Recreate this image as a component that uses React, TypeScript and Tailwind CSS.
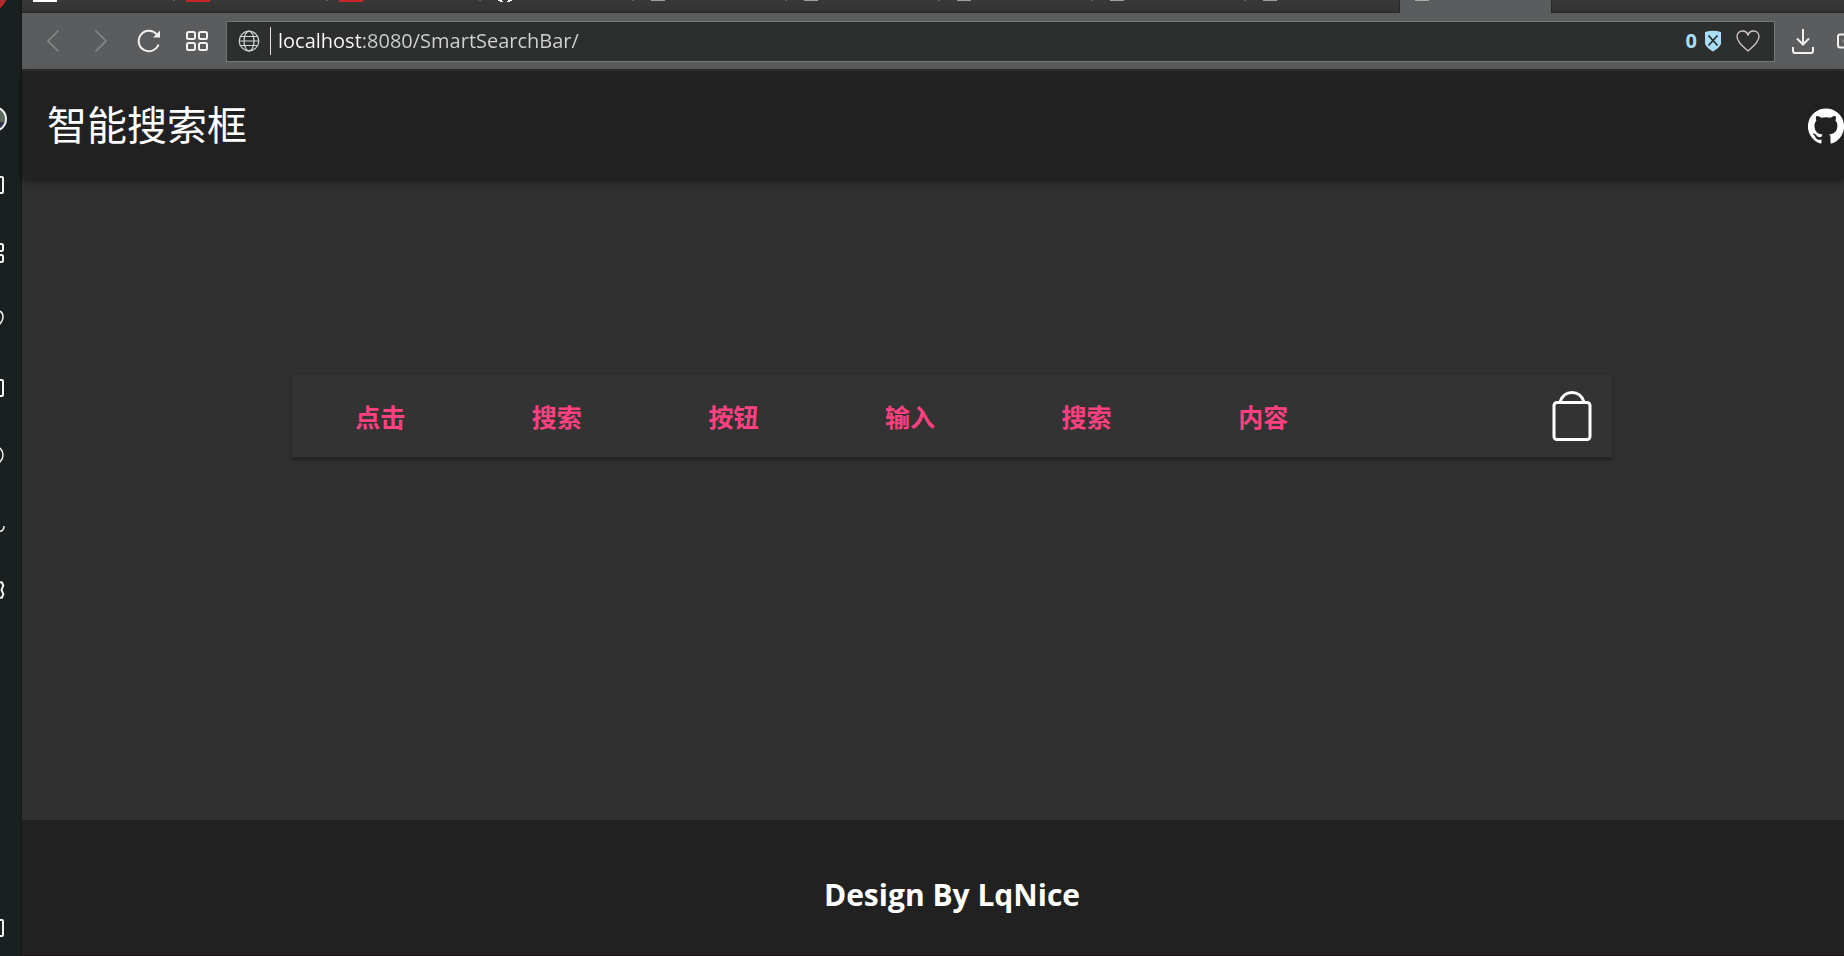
import type { ReactNode } from "react";

const words = ["点击", "搜索", "按钮", "输入", "搜索", "内容"];

const tabs = [
  { name: "one", icon: "w-6 h-[2px] bg-white", pad: "pl-[11px]" },
  { name: "two", icon: "w-6 h-[2px] bg-[#c62828]", pad: "pl-[11px]" },
  { name: "three", icon: "w-6 h-[2px] bg-[#c62828]", pad: "pl-[11px]" },
  { name: "four", icon: "cat", pad: "pl-[16px]" },
  { name: "five", icon: "w-[14px] h-px bg-[#9a9f9f]", pad: "pl-[17px]" },
  { name: "six", icon: "w-[14px] h-px bg-[#9a9f9f]", pad: "pl-[17px]" },
  { name: "seven", icon: "w-[14px] h-px bg-[#9a9f9f]", pad: "pl-[17px]" },
  { name: "eight", icon: "w-[14px] h-px bg-[#9a9f9f]", pad: "pl-[17px]" },
  { name: "nine", icon: "w-[14px] h-px bg-[#9a9f9f]", pad: "pl-[17px]" },
];

function SideIcon({ label, children }: { label: string; children: ReactNode }) {
  return (
    <li className="flex flex-1 items-center">
      <button type="button" aria-label={label} className="block">
        <svg width="8" height="28" viewBox="0 0 8 28" fill="none" stroke="#f2f2f2" strokeWidth="2">
          {children}
        </svg>
      </button>
    </li>
  );
}

function Sidebar() {
  return (
    <nav className="flex w-[22px] shrink-0 flex-col border-r border-[#141718] bg-[#1a1f20]">
      <svg width="8" height="85" viewBox="0 0 8 85">
        <circle cx="-8" cy="-4" r="14.5" fill="#b2292e" />
      </svg>
      <ul className="flex h-[540px] flex-col">
        <SideIcon label="Profile">
          <circle cx="-6" cy="14" r="12" fill="#5c6b5c" stroke="none" />
          <path d="M-6 17H6l-3 6-9 3z" fill="#33334f" stroke="none" />
          <circle cx="-6" cy="14" r="12" />
        </SideIcon>
        <SideIcon label="Messages">
          <rect x="-13" y="5" width="16" height="16" rx="1" />
        </SideIcon>
        <SideIcon label="Speed dial">
          <rect x="-4" y="4" width="7" height="7" rx="1.5" />
          <rect x="-4" y="15" width="7" height="7" rx="1.5" />
        </SideIcon>
        <SideIcon label="Bookmarks">
          <path d="M-2 4C1 4 3 6 3 10c0 4-2 6-5 9" strokeWidth="1.5" />
        </SideIcon>
        <SideIcon label="News">
          <rect x="-13" y="5" width="16" height="16" rx="1" />
        </SideIcon>
        <SideIcon label="History">
          <circle cx="-6" cy="13" r="9" strokeWidth="1.5" />
        </SideIcon>
        <SideIcon label="Flow">
          <path d="M-2 21c4 1 6-1 6-5" strokeWidth="1.5" />
        </SideIcon>
        <SideIcon label="Settings">
          <path d="M-1 5l3 .5 1.300 3L1.500 13l1.800 4-1.300 3.500-3 .5" />
        </SideIcon>
      </ul>
      <button type="button" aria-label="Sidebar setup" className="mt-auto mb-[19px] block">
        <svg width="8" height="18" viewBox="0 0 8 18" fill="none" stroke="#f2f2f2" strokeWidth="2">
          <rect x="-13" y="1" width="16" height="16" rx="1" />
        </svg>
      </button>
    </nav>
  );
}

function TabStrip() {
  return (
    <div className="flex h-[13px] bg-gradient-to-b from-[#393939] to-[#323232]">
      {tabs.map((tab, i) => (
        <div
          key={tab.name}
          className={`flex h-[13px] w-[153px] shrink-0 items-start justify-between border-b border-[#262727] ${tab.pad}`}
        >
          {tab.icon === "cat" ? (
            <svg width="16" height="2" viewBox="0 0 16 2" fill="#fff">
              <path d="M1 0h4v1h1v1H3V1H1zM15 0h-4v1h-1v1h3V1h2z" />
            </svg>
          ) : (
            <span className={tab.icon} />
          )}
          {i < 8 && <span className="h-px w-[2px] bg-[#5c6468]" />}
        </div>
      ))}
      <div className="h-[13px] w-[153px] shrink-0 border-x border-[#262727] bg-[#5b5c5e] pl-[15px]">
        <span className="block h-px w-[14px] bg-[#a8aaaa]" />
      </div>
      <div className="flex-1 border-b border-[#262727]" />
    </div>
  );
}

function Toolbar() {
  return (
    <div className="flex h-[56px] items-center bg-[#5b5c5e]">
      <div className="flex w-[204px] shrink-0 items-center">
        <button type="button" aria-label="Back" className="ml-[24px]">
          <svg width="14" height="24" viewBox="0 0 14 24" fill="none" stroke="#878889" strokeWidth="1.600">
            <path d="M12.500 1.500L2 12l10.500 10.500" />
          </svg>
        </button>
        <button type="button" aria-label="Forward" className="ml-[34px]">
          <svg width="14" height="24" viewBox="0 0 14 24" fill="none" stroke="#878889" strokeWidth="1.600">
            <path d="M1.500 1.500L12 12 1.500 22.500" />
          </svg>
        </button>
        <button type="button" aria-label="Reload" className="ml-[29px]">
          <svg width="24" height="24" viewBox="0 0 24 24" fill="none" stroke="#f0f0f0" strokeWidth="2">
            <path d="M21.500 15.500A10.200 10.200 0 1 1 19.500 5.200" />
            <path d="M23 1.500v7h-7z" fill="#f0f0f0" stroke="none" />
          </svg>
        </button>
        <button type="button" aria-label="Start page" className="ml-[25px]">
          <svg width="22" height="22" viewBox="0 0 22 22" fill="none" stroke="#f0f0f0" strokeWidth="2">
            <rect x="1" y="2" width="8" height="7" rx="1.500" />
            <rect x="13" y="2" width="8" height="7" rx="1.500" />
            <rect x="1" y="13" width="8" height="7" rx="1.500" />
            <rect x="13" y="13" width="8" height="7" rx="1.500" />
          </svg>
        </button>
      </div>
      <div className="flex h-[41px] flex-1 items-center border border-[#757777] bg-[#2d2f2e]">
        <svg className="ml-[11px] shrink-0" width="22" height="22" viewBox="0 0 22 22" fill="none" stroke="#d4d5d5" strokeWidth="1.200">
          <circle cx="11" cy="11" r="9.800" />
          <ellipse cx="11" cy="11" rx="5" ry="9.800" />
          <path d="M2.500 6.500h17M1 11h20M2.500 15.500h17" />
        </svg>
        <span className="ml-[10px] h-7 w-px bg-[#e4e4e4]" />
        <input
          aria-label="Address"
          defaultValue="localhost:8080/SmartSearchBar/"
          className="ml-[7px] h-8 min-w-0 flex-1 bg-[linear-gradient(90deg,#ffffff_84px,#d2d3d3_84px)] bg-clip-text pb-[2px] font-['Open_Sans',sans-serif] text-[20px] text-transparent outline-none"
        />
        <span className="mr-[7px] font-['Open_Sans',sans-serif] text-[20px] leading-7 font-bold text-[#a8defa]">0</span>
        <svg width="18" height="22" viewBox="0 0 18 22">
          <path d="M1 2Q9-.5 17 2v12q-2 4-8 7.500Q3 18 1 14z" fill="#a8defa" />
          <path d="M4.500 5.500l9 10M13.500 5.500l-9 10" stroke="#2d2f2e" strokeWidth="1.800" />
        </svg>
        <button type="button" aria-label="Bookmark" className="mr-[14px] ml-[14px]">
          <svg width="24" height="22" viewBox="0 0 24 22" fill="none" stroke="#d4c8ca" strokeWidth="1.300">
            <path d="M12 21C8 17.500 1 12.500 1 6.500 1 3 3.500 1 6.500 1 9.500 1 11.500 3 12 5.500 12.500 3 14.500 1 17.500 1 20.500 1 23 3 23 6.500 23 12.500 16 17.500 12 21z" />
          </svg>
        </button>
      </div>
      <div className="flex w-[69px] shrink-0 items-center overflow-hidden">
        <button type="button" aria-label="Downloads" className="ml-[17px]">
          <svg width="22" height="26" viewBox="0 0 22 26" fill="none" stroke="#f0f0f0" strokeWidth="2">
            <path d="M11 1v15M5 10.500l6 6 6-6M1 19v3.500Q1 25 3 25h16q2 0 2-2.500V19" />
          </svg>
        </button>
        <button type="button" aria-label="Battery" className="ml-[22px]">
          <svg width="8" height="16" viewBox="0 0 8 16" fill="none" stroke="#f0f0f0" strokeWidth="2">
            <path d="M9 1.500H4Q2 1.500 2 3.500v9q0 2 2 2h5" />
            <path d="M6 8h2" strokeWidth="3" stroke="#77797a" />
          </svg>
        </button>
      </div>
    </div>
  );
}

export default function App() {
  return (
    <div className="flex min-h-screen overflow-hidden bg-[#303030] font-['Open_Sans','Noto_Sans_CJK_SC',sans-serif]">
      <Sidebar />
      <div className="flex min-w-0 flex-1 flex-col">
        <TabStrip />
        <Toolbar />
        <div className="h-[2px] border-t border-[#262727] bg-[#353636]" />
        <header className="flex h-[108px] items-center justify-between bg-[#212121] pt-[2px] pl-[25px] shadow-[0_2px_4px_-1px_rgba(0,0,0,0.2),0_4px_5px_0_rgba(0,0,0,0.14),0_1px_10px_0_rgba(0,0,0,0.12)]">
          <h1 className="pb-[6px] font-['Noto_Sans_CJK_SC',sans-serif] text-[40px] leading-[60px] text-white">智能搜索框</h1>
          <a href="https://github.com" aria-label="GitHub">
            <svg width="36" height="36" viewBox="0 0 24 24" fill="#fff">
              <path d="M12 .3a12 12 0 0 0-3.800 23.400c.6.1.8-.3.8-.6v-2c-3.300.7-4-1.600-4-1.600-.6-1.400-1.400-1.800-1.400-1.800-1-.7.1-.7.1-.7 1.200 0 1.900 1.200 1.900 1.200 1 1.800 2.800 1.300 3.500 1 0-.8.4-1.300.7-1.600-2.700-.3-5.500-1.300-5.500-6 0-1.200.5-2.300 1.300-3.100-.2-.4-.6-1.600 0-3.200 0 0 1-.3 3.400 1.200a11.500 11.500 0 0 1 6 0c2.300-1.500 3.300-1.200 3.300-1.200.6 1.600.2 2.800 0 3.200.9.8 1.300 1.900 1.300 3.200 0 4.600-2.800 5.600-5.500 5.900.5.4.9 1 .9 2.200v3.300c0 .3.1.7.8.6A12 12 0 0 0 12 .3" />
            </svg>
          </a>
        </header>
        <main className="flex-1 pt-[196px] pr-[232px] pl-[270px]">
          <div className="flex h-[82px] bg-[#333333] shadow-[0_3px_3px_-2px_rgba(0,0,0,0.2),0_3px_4px_0_rgba(0,0,0,0.14),0_1px_8px_0_rgba(0,0,0,0.12)]">
            <ul className="grid flex-1 grid-cols-7 items-center text-center font-['Noto_Sans_CJK_SC',sans-serif] text-[25px] leading-9 font-bold text-[#ff4081]">
              {words.map((word, i) => (
                <li key={i}>{word}</li>
              ))}
            </ul>
            <button type="button" aria-label="搜索" className="flex w-[84px] items-center justify-center pl-[4px]">
              <svg width="40" height="52" viewBox="0 0 40 52" fill="none" stroke="#fff" strokeWidth="3">
                <rect x="2" y="12.500" width="36" height="37" rx="3" />
                <path d="M8 12C10 6 14.500 2.500 20 2.500S30 6 32 12" />
              </svg>
            </button>
          </div>
        </main>
        <footer className="flex h-[136px] items-center justify-center border-b border-[#1a1516] bg-[#212121] pt-[14px] pl-[38px]">
          <p className="text-[30px] leading-10 font-bold text-white">Design By LqNice</p>
        </footer>
      </div>
    </div>
  );
}
